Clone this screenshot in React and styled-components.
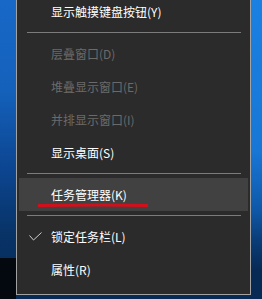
import React from "react";
import styled, { createGlobalStyle } from "styled-components";

const Global = createGlobalStyle`
  html, body { margin: 0; padding: 0; }
  body {
    width: 262px;
    height: 299px;
    overflow: hidden;
    font-family: "Noto Sans CJK SC", "Noto Sans", sans-serif;
    background:
      linear-gradient(#04080f, #04080f) 0 258px / 16px 41px no-repeat,
      linear-gradient(180deg, #1868c8 0px, #1461bb 90px, #0c4590 170px, #083469 230px, #072a55 299px);
  }
`;

const Screen = styled.div`
  display: flex;
  padding-left: 16px;
  background:
    linear-gradient(90deg, transparent 0 251px, transparent 251px),
    linear-gradient(180deg, #1a80e2 0, #1877d6 150px, #0f58a8 210px, #0a3d78 240px, #072a55 270px);
  background-size: 100% 100%, 11px 100%;
  background-position: 0 0, 251px 0;
  background-repeat: no-repeat;
`;

const Menu = styled.div`
  margin-top: -10px;
  width: 235px;
  box-sizing: border-box;
  background: #2b2b2b;
  border: 1px solid #a2a2a2;
  padding: 4px 2px 8px;
  display: flex;
  flex-direction: column;
`;

const Item = styled.div`
  position: relative;
  height: 33px;
  display: grid;
  grid-template-columns: 32px 1fr;
  align-items: center;
  font-size: 12px;
  color: ${(p) => (p.$disabled ? "#6a6a6a" : "#ffffff")};
  background: ${(p) => (p.$active ? "#414141" : "transparent")};
  white-space: nowrap;
`;

const CheckCell = styled.div`
  display: flex;
  align-items: center;
  padding-left: 10px;
`;

const Separator = styled.div`
  height: 9px;
  display: flex;
  align-items: center;
  padding: 0 7px 0 8px;
  &::after {
    content: "";
    flex: 1;
    height: 1px;
    background: #7c7c7c;
  }
`;

const Underline = styled.svg`
  position: absolute;
  left: 19px;
  top: 25px;
  width: 110px;
  height: 5px;
`;

const Check = () => (
  <svg width="13" height="10" viewBox="0 0 13 10">
    <polyline points="0.5,3.5 4.5,8 12.5,0.5" fill="none" stroke="#cfcfcf" strokeWidth="1" />
  </svg>
);

const items = [
  { t: "显示触摸键盘按钮(Y)" },
  "sep",
  { t: "层叠窗口(D)", d: true },
  { t: "堆叠显示窗口(E)", d: true },
  { t: "并排显示窗口(I)", d: true },
  { t: "显示桌面(S)" },
  "sep",
  { t: "任务管理器(K)", a: true, u: true },
  "sep",
  { t: "锁定任务栏(L)", c: true },
  { t: "属性(R)" },
];

export default function App() {
  return (
    <>
      <Global />
      <Screen>
        <Menu>
          {items.map((it, i) =>
            it === "sep" ? (
              <Separator key={i} />
            ) : (
              <Item key={i} $disabled={it.d} $active={it.a}>
                <CheckCell>{it.c ? <Check /> : null}</CheckCell>
                <span>{it.t}</span>
                {it.u ? (
                  <Underline viewBox="0 0 110 5">
                    <path d="M1 2.6 Q55 1.6 109 2.4" stroke="#d2101c" strokeWidth="3" strokeLinecap="round" fill="none" />
                  </Underline>
                ) : null}
              </Item>
            )
          )}
        </Menu>
      </Screen>
    </>
  );
}
